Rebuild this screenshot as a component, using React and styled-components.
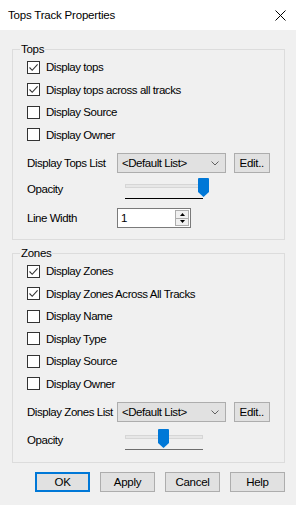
import React from 'react'
import styled, { createGlobalStyle } from 'styled-components'

const GlobalStyle = createGlobalStyle`
  html, body {
    margin: 0;
    padding: 0;
    background: #f0f0f0;
  }
  body {
    font-family: "Liberation Sans", Arial, sans-serif;
    font-size: 11px;
    color: #000;
  }
  * { box-sizing: border-box; }
`

const Dialog = styled.div`
  width: 296px;
  height: 505px;
  background: #f0f0f0;
  display: flex;
  flex-direction: column;
  overflow: hidden;
`

const TitleBar = styled.div`
  height: 30px;
  flex-shrink: 0;
  background: #fff;
  display: flex;
  align-items: center;
  justify-content: space-between;
  padding: 0 10px 0 8px;
  font-size: 11.5px;
  letter-spacing: -0.2px;
`

const Body = styled.div`
  padding: 13px 11px 0 12px;
  display: flex;
  flex-direction: column;
`

const Group = styled.fieldset`
  margin: 0 0 ${p => p.$gap || 0}px 0;
  padding: 0;
  min-width: 0;
  border: 1px solid #dcdcdc;
`

const Legend = styled.legend`
  margin-left: 7px;
  padding: 0 1px;
  line-height: 13px;
  font-size: 11.5px;
  letter-spacing: -0.3px;
`

const Content = styled.div`
  display: flex;
  flex-direction: column;
  padding: 0 14px ${p => p.$bottom}px 14px;
`

const CheckRow = styled.label`
  height: 22.5px;
  display: flex;
  align-items: center;
  gap: 6px;
  font-size: 11.5px;
  letter-spacing: -0.45px;
  white-space: nowrap;
`

const Box = styled.span`
  width: 13px;
  height: 13px;
  flex-shrink: 0;
  border: 1px solid #333;
  background: #fff;
  display: flex;
  align-items: center;
  justify-content: center;
`

const FieldRow = styled.div`
  display: flex;
  align-items: center;
  margin-top: ${p => p.$top}px;
  height: ${p => p.$h || 20}px;
`

const FieldLabel = styled.span`
  width: 90px;
  flex-shrink: 0;
  font-size: 11.5px;
  letter-spacing: -0.45px;
  white-space: nowrap;
`

const Combo = styled.div`
  width: 110px;
  height: 20px;
  background: #e1e1e1;
  border: 1px solid #adadad;
  display: flex;
  align-items: center;
  justify-content: space-between;
  padding: 0 6px 0 4px;
  font-size: 11.5px;
  letter-spacing: -0.45px;
`

const SmallButton = styled.button`
  margin-left: 8px;
  width: 37px;
  height: 20px;
  padding: 0;
  background: #e1e1e1;
  border: 1px solid #adadad;
  font-family: inherit;
  font-size: 11.5px;
  letter-spacing: -0.3px;
  color: #000;
`

const Slider = styled.div`
  position: relative;
  width: 92px;
  height: 24px;
`

const Track = styled.div`
  position: absolute;
  left: 8px;
  top: 7px;
  width: 78px;
  height: 4px;
  background: #e7e7e7;
  border: 1px solid #d6d6d6;
`

const Thumb = styled.svg`
  position: absolute;
  top: 1px;
`

const TickLine = styled.div`
  position: absolute;
  left: 8px;
  top: 21px;
  width: 78px;
  height: 1px;
  background: ${p => (p.$focused ? '#000' : '#6d6d6d')};
`

const Spin = styled.div`
  width: 74px;
  height: 20px;
  background: #fff;
  border: 1px solid #7a7a7a;
  display: flex;
  align-items: center;
  justify-content: space-between;
  padding: 0 1px 0 3px;
  font-size: 11.5px;
`

const SpinButtons = styled.div`
  display: flex;
  flex-direction: column;
  width: 14px;
  height: 16px;
`

const SpinHalf = styled.div`
  flex: 1;
  border: 1px solid #adadad;
  background: #f0f0f0;
  display: flex;
  align-items: center;
  justify-content: center;
  & + & { border-top: none; }
`

const Footer = styled.div`
  display: flex;
  justify-content: flex-end;
  gap: 10px;
  margin-top: 9px;
`

const Button = styled.button`
  width: 55px;
  height: 20px;
  padding: 0;
  background: #e1e1e1;
  border: ${p => (p.$default ? '2px solid #0078d7' : '1px solid #adadad')};
  font-family: inherit;
  font-size: 11.5px;
  letter-spacing: -0.3px;
  color: #000;
`

const CloseIcon = () => (
  <svg width="11" height="11" viewBox="0 0 11 11">
    <path d="M0.5 0.5 L10.5 10.5 M10.5 0.5 L0.5 10.5" stroke="#000" strokeWidth="1" fill="none" />
  </svg>
)

const Check = ({ checked, children }) => (
  <CheckRow>
    <Box>
      {checked && (
        <svg width="11" height="11" viewBox="0 0 11 11">
          <path d="M1.5 5.5 L4.2 8.3 L9.6 2.3" stroke="#333" strokeWidth="1.1" fill="none" />
        </svg>
      )}
    </Box>
    {children}
  </CheckRow>
)

const Chevron = () => (
  <svg width="8" height="5" viewBox="0 0 8 5">
    <path d="M0.5 0.5 L4 4 L7.5 0.5" stroke="#606060" strokeWidth="1" fill="none" />
  </svg>
)

const ListRow = ({ label }) => (
  <FieldRow $top={7}>
    <FieldLabel>{label}</FieldLabel>
    <Combo>
      <span>&lt;Default List&gt;</span>
      <Chevron />
    </Combo>
    <SmallButton>Edit..</SmallButton>
  </FieldRow>
)

// thumb travels from the track start (8px) to just past its end (81px)
const OpacityRow = ({ value, focused, top }) => (
  <FieldRow $top={top} $h={24}>
    <FieldLabel>Opacity</FieldLabel>
    <Slider>
      <Track />
      <Thumb width="11" height="19" viewBox="0 0 11 19" style={{ left: 8 + value * 73 }}>
        <path d="M1 0 H10 Q11 0 11 1 V14 L5.5 19 L0 14 V1 Q0 0 1 0 Z" fill="#0078d7" />
      </Thumb>
      <TickLine $focused={focused} />
    </Slider>
  </FieldRow>
)

const TriUp = () => (
  <svg width="5" height="3" viewBox="0 0 5 3"><path d="M2.5 0 L5 3 H0 Z" fill="#000" /></svg>
)
const TriDown = () => (
  <svg width="5" height="3" viewBox="0 0 5 3"><path d="M0 0 H5 L2.5 3 Z" fill="#000" /></svg>
)

export default function App() {
  return (
    <Dialog>
      <GlobalStyle />
      <TitleBar>
        <span>Tops Track Properties</span>
        <CloseIcon />
      </TitleBar>
      <Body>
        <Group $gap={7}>
          <Legend>Tops</Legend>
          <Content $bottom={11}>
            <Check checked>Display tops</Check>
            <Check checked>Display tops across all tracks</Check>
            <Check>Display Source</Check>
            <Check>Display Owner</Check>
            <ListRow label="Display Tops List" />
            <OpacityRow value={1} focused top={4} />
            <FieldRow $top={7}>
              <FieldLabel>Line Width</FieldLabel>
              <Spin>
                <span>1</span>
                <SpinButtons>
                  <SpinHalf><TriUp /></SpinHalf>
                  <SpinHalf><TriDown /></SpinHalf>
                </SpinButtons>
              </Spin>
            </FieldRow>
          </Content>
        </Group>
        <Group>
          <Legend>Zones</Legend>
          <Content $bottom={10}>
            <Check checked>Display Zones</Check>
            <Check checked>Display Zones Across All Tracks</Check>
            <Check>Display Name</Check>
            <Check>Display Type</Check>
            <Check>Display Source</Check>
            <Check>Display Owner</Check>
            <ListRow label="Display Zones List" />
            <OpacityRow value={0.45} top={6} />
          </Content>
        </Group>
        <Footer>
          <Button $default>OK</Button>
          <Button>Apply</Button>
          <Button>Cancel</Button>
          <Button>Help</Button>
        </Footer>
      </Body>
    </Dialog>
  )
}
